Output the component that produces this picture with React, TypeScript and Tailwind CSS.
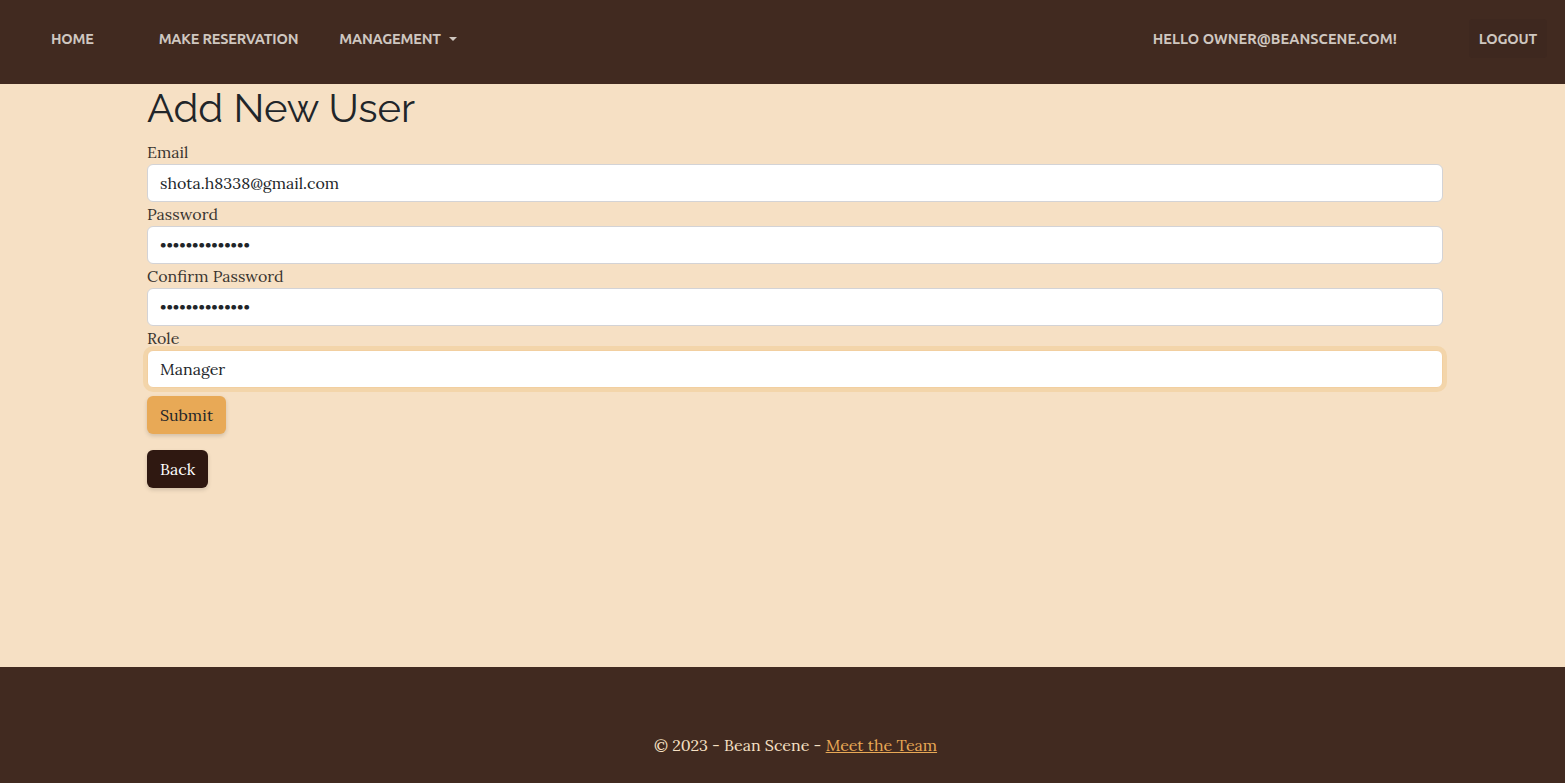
import React from 'react';

const serif = "font-['Lora','DejaVu_Serif','Liberation_Serif',serif]";

function Field({ label, type, value, focused }: { label: string; type: string; value: string; focused?: boolean }) {
  return (
    <div className="flex flex-col">
      <label className="text-[16px] leading-6 text-[#3a3530]">{label}</label>
      <input
        type={type}
        defaultValue={value}
        readOnly
        className={`h-[38px] w-full rounded-[6px] bg-white px-3 text-[16px] text-[#212529] outline-none ${
          focused
            ? 'border border-[#f2cfa0] shadow-[0_0_0_4px_#f3d5aa]'
            : 'border border-[#d3d3d6]'
        } ${serif}`}
      />
    </div>
  );
}

export default function App() {
  return (
    <div className={`flex min-h-[783px] flex-col bg-[#f6e0c4] ${serif}`}>
      {/* Top navigation */}
      <nav className="flex h-[84px] items-center bg-[#412a20] pb-[7px] font-['Ubuntu','Open_Sans','Lato',sans-serif] text-[14.5px] font-bold uppercase text-[#cfc7c0]">
        <div className="flex items-center">
          <a className="ml-[51px] tracking-[-0.2px]">Home</a>
          <a className="ml-[65px] tracking-[-0.2px]">Make Reservation</a>
          <a className="ml-[41px] flex items-center gap-[8px] tracking-[-0.2px]">
            Management
            <span className="mt-[1px] h-0 w-0 border-x-[4px] border-t-[4px] border-x-transparent border-t-[#cfc7c0]" />
          </a>
        </div>
        <div className="ml-auto flex items-center">
          <span className="tracking-[0.05px]">Hello owner@beanscene.com!</span>
          <a className="ml-[72px] mr-[18px] rounded-[4px] bg-[#3e281f] px-[10px] py-[9px] tracking-[-0.2px]">Logout</a>
        </div>
      </nav>

      {/* Main form */}
      <main className="flex-1">
        <div className="ml-[147px] w-[1296px]">
          <h1 className="mb-2 font-['Raleway','Lato',sans-serif] text-[40px] leading-[48px] text-[#212529]">Add New User</h1>
          <form className="flex flex-col">
            <Field label="Email" type="text" value="shota.h8338@gmail.com" />
            <Field label="Password" type="password" value="abcdefghijklmn" />
            <Field label="Confirm Password" type="password" value="abcdefghijklmn" />
            <Field label="Role" type="text" value="Manager" focused />
            <div className="mt-2">
              <button type="button" className="h-[38px] rounded-[6px] bg-[#e8a956] px-[13px] text-[16px] text-[#212529] shadow-[0_2px_4px_rgba(0,0,0,0.15)]">
                Submit
              </button>
            </div>
            <div className="mt-4">
              <button type="button" className="h-[38px] rounded-[6px] bg-[#2f1811] px-[13px] text-[16px] text-white shadow-[0_2px_4px_rgba(0,0,0,0.15)]">
                Back
              </button>
            </div>
          </form>
        </div>
      </main>

      {/* Footer */}
      <footer className="flex h-[116px] items-end justify-center bg-[#412a20] pb-[26px] pl-[26px] text-[16px] text-[#f6e0c4]">
        <span>
          © 2023 - Bean Scene - <a className="text-[#e8a956] underline">Meet the Team</a>
        </span>
      </footer>
    </div>
  );
}
